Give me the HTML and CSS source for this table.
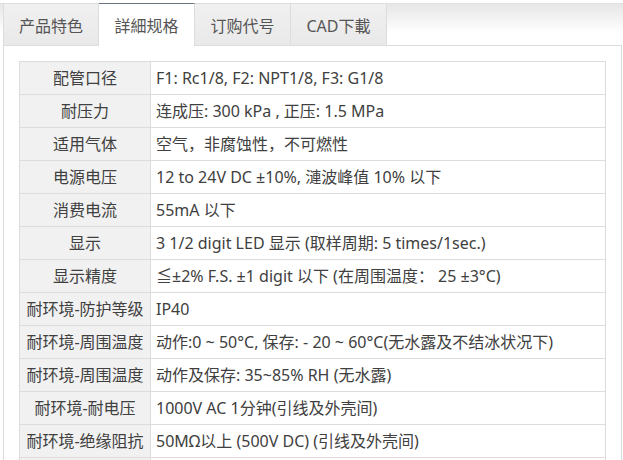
FILE: index.html
```html
<!DOCTYPE html>
<html lang="zh">
<head>
<meta charset="utf-8">
<link rel="stylesheet" href="styles.css">
</head>
<body>
<div class="tabbar">
  <div class="tab">产品特色</div>
  <div class="tab active">詳細规格</div>
  <div class="tab">订购代号</div>
  <div class="tab">CAD下載</div>
</div>
<div class="panel">
  <table class="spec">
    <tr><th>配管口径</th><td>F1: Rc1/8, F2: NPT1/8, F3: G1/8</td></tr>
    <tr><th>耐压力</th><td>连成压: 300 kPa , 正压: 1.5 MPa</td></tr>
    <tr><th>适用气体</th><td>空气，非腐蚀性，不可燃性</td></tr>
    <tr><th>电源电压</th><td>12 to 24V DC ±10%, 漣波峰值 10% 以下</td></tr>
    <tr><th>消费电流</th><td>55mA 以下</td></tr>
    <tr><th>显示</th><td>3 1/2 digit LED 显示 (取样周期: 5 times/1sec.)</td></tr>
    <tr><th>显示精度</th><td>≦±2% F.S. ±1 digit 以下 (在周围温度： 25 ±3°C)</td></tr>
    <tr><th>耐环境-防护等级</th><td>IP40</td></tr>
    <tr><th>耐环境-周围温度</th><td>动作:0 ~ 50°C, 保存: - 20 ~ 60°C(无水露及不结冰状况下)</td></tr>
    <tr><th>耐环境-周围温度</th><td>动作及保存: 35~85% RH (无水露)</td></tr>
    <tr><th>耐环境-耐电压</th><td>1000V AC 1分钟(引线及外壳间)</td></tr>
    <tr><th>耐环境-绝缘阻抗</th><td>50MΩ以上 (500V DC) (引线及外壳间)</td></tr>
    <tr class="empty"><th></th><td></td></tr>
  </table>
</div>
</body>
</html>
```
FILE: styles.css
```css
html, body {
  margin: 0;
  padding: 0;
  background: #fff;
}
body {
  font-family: "Noto Sans", "Noto Sans CJK SC", sans-serif;
  font-size: 16px;
  color: #404040;
  height: 460px;
  overflow: hidden;
}
.tabbar {
  display: flex;
  margin-top: 3px;
  padding-left: 3px;
  border-top: 1px solid #e2e2e2;
  height: 41px;
  background: linear-gradient(#e6e6e6, #fff 70%);
}
.tab {
  width: 96px;
  height: 42px;
  margin-top: -1px;
  box-sizing: border-box;
  border: 1px solid #dcdcdc;
  border-left: none;
  border-bottom: none;
  background: linear-gradient(#f0f0f0, #e9e9e9);
  color: #555;
  display: flex;
  align-items: center;
  justify-content: center;
  line-height: 1;
  position: relative;
  z-index: 1;
  padding-top: 2px;
}
.tab:first-child {
  border-left: 1px solid #dcdcdc;
}
.tab.active {
  background: #fff;
  border-top: 1px solid #6a7687;
  height: 43px;
}
.panel {
  margin-left: 3px;
  width: 619px;
  box-sizing: border-box;
  border: 1px solid #dcdcdc;
  border-bottom: none;
  padding: 15px 15px 0;
  height: 415px;
  overflow: hidden;
}
.spec {
  border-collapse: collapse;
  width: 587px;
}
.spec th, .spec td {
  border: 1px solid #dcdcdc;
  height: 33px;
  padding: 0 5px;
  box-sizing: border-box;
  line-height: 20px;
  font-weight: normal;
  white-space: nowrap;
}
.spec th {
  width: 131px;
  background: #f1f1f1;
  text-align: center;
  padding: 0 3px;
}
.spec td {
  text-align: left;
}
.spec .empty th, .spec .empty td {
  height: 4px;
}
```
